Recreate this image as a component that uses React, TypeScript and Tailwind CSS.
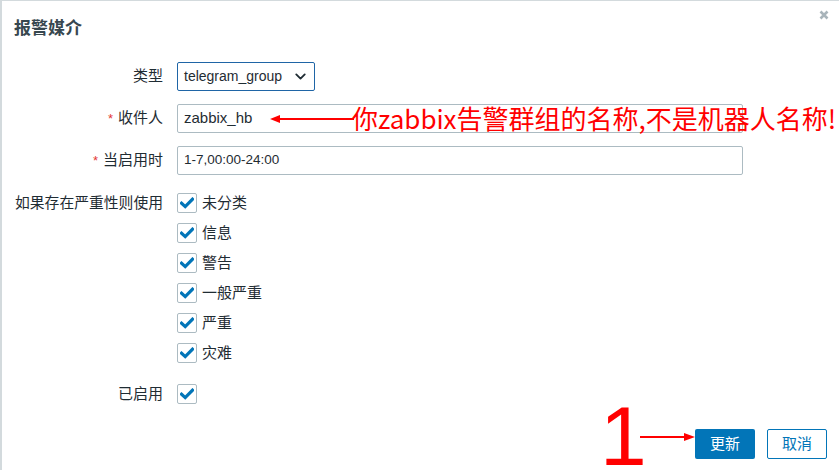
import { ChevronDown } from 'lucide-react'

const severities = ['未分类', '信息', '警告', '一般严重', '严重', '灾难']

function Check() {
  return (
    <span className="flex h-[20px] w-[20px] items-center justify-center rounded-[2px] border border-[#acbbc2] bg-white">
      <svg width="14" height="12" viewBox="0 0 14 12">
        <path d="M1.5 6.2 L5.2 9.6 L12.5 2.2" fill="none" stroke="#0275b8" strokeWidth="3.2" strokeLinecap="square" />
      </svg>
    </span>
  )
}

function Label({ text, required }: { text: string; required?: boolean }) {
  return (
    <div className="flex h-[29px] items-center justify-end text-[15px] text-[#1f2c33]">
      {required && <span className="mr-[5px] text-[13px] text-[#e33734]">*</span>}
      {text}
    </div>
  )
}

export default function App() {
  return (
    <div className="relative h-[470px] w-[839px] overflow-hidden border-l-2 border-t border-[#d3dadd] bg-white font-['Liberation_Sans','Noto_Sans_CJK_SC',sans-serif] text-[#1f2c33]">
      <div className="flex h-[52px] items-center pl-[12px]">
        <h4 className="font-['Noto_Sans_CJK_SC',sans-serif] text-[17px] font-bold text-[#37474f]">报警媒介</h4>
      </div>
      <button className="absolute right-[9px] top-[8px] p-[1px]">
        <svg width="10" height="10" viewBox="0 0 10 10">
          <path d="M1.5 1.5 L8.5 8.5 M8.5 1.5 L1.5 8.5" stroke="#a8b4ba" strokeWidth="2.6" />
        </svg>
      </button>

      <div className="grid grid-cols-[149px_566px] gap-x-[14px] pl-[12px] pt-[9px]">
        <Label text="类型" />
        <div className="flex h-[29px] w-[138px] items-center justify-between rounded-[2px] border border-[#1f65a6] pl-[6px] pr-[5px] text-[14px]">
          <span>telegram_group</span>
          <ChevronDown size={17} strokeWidth={2.6} color="#1f2c33" />
        </div>

        <div className="mt-[13px]">
          <Label text="收件人" required />
        </div>
        <div className="mt-[13px] flex h-[29px] items-center rounded-[2px] border border-[#acbbc2] px-[6px] text-[15px]">
          zabbix_hb
        </div>

        <div className="mt-[13px]">
          <Label text="当启用时" required />
        </div>
        <div className="mt-[13px] flex h-[29px] items-center rounded-[2px] border border-[#acbbc2] px-[6px] text-[13.5px]">
          1-7,00:00-24:00
        </div>

        <div className="mt-[18px] flex h-[20px] items-center justify-end whitespace-nowrap text-[14.8px]">如果存在严重性则使用</div>
        <div className="mt-[18px] flex flex-col gap-[10px]">
          {severities.map((s) => (
            <div key={s} className="flex h-[20px] items-center gap-[5px] text-[15px]">
              <Check />
              <span>{s}</span>
            </div>
          ))}
        </div>

        <div className="mt-[21px] flex h-[20px] items-center justify-end text-[15px]">已启用</div>
        <div className="mt-[21px]">
          <Check />
        </div>
      </div>

      <div className="mt-[25px] flex justify-end gap-[12px] pr-[12px]">
        <button className="h-[30px] w-[60px] rounded-[2px] bg-[#0275b8] text-[15px] text-white">更新</button>
        <button className="h-[30px] w-[60px] rounded-[2px] border border-[#0275b8] bg-white text-[15px] text-[#0275b8]">取消</button>
      </div>

      {/* annotations */}
      <svg className="absolute left-[266px] top-[111px]" width="86" height="14" viewBox="0 0 86 14">
        <path d="M86 7 L10 7" stroke="#ff0000" strokeWidth="2" />
        <path d="M2 7 L12 3 L12 11 Z" fill="#ff0000" />
      </svg>
      <div className="absolute left-[350px] top-[100px] whitespace-nowrap font-['Noto_Sans_CJK_SC',sans-serif] text-[26px] leading-[34px] text-[#ff0000]">
        你zabbix告警群组的名称,不是机器人名称!
      </div>

      <div className="absolute left-[598px] top-[404px] font-['Liberation_Sans',sans-serif] text-[84px] leading-[62px] text-[#ff0000]">1</div>
      <svg className="absolute left-[638px] top-[429px]" width="56" height="14" viewBox="0 0 56 14">
        <path d="M0 7 L46 7" stroke="#ff0000" strokeWidth="2" />
        <path d="M55 7 L44 3 L44 11 Z" fill="#ff0000" />
      </svg>
    </div>
  )
}
